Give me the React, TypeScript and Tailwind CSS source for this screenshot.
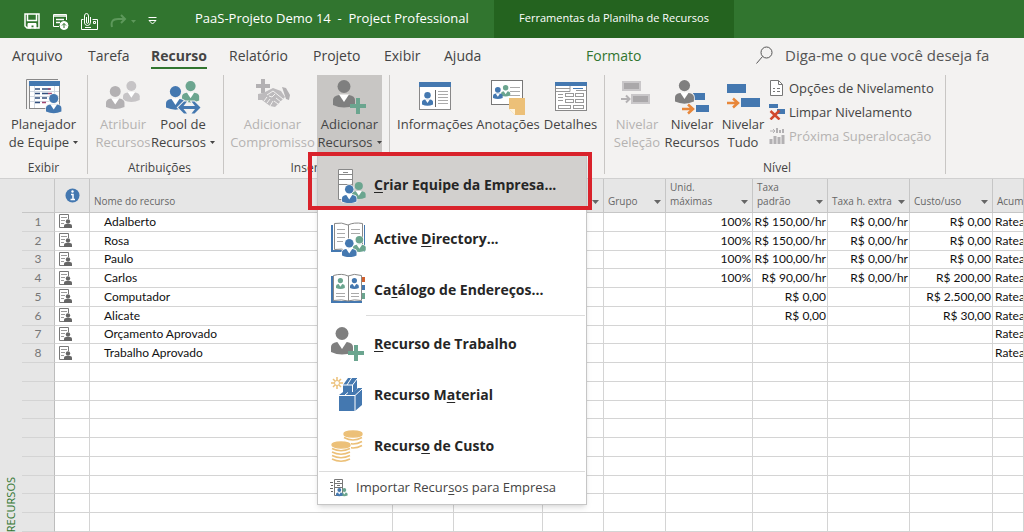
import React from "react";

const BLUE = "#4478b0";
const GREEN = "#6ba58f";
const GRAY = "#7f7f7f";
const MUTED = "#b3b1b3";
const ORANGE = "#e8873a";
const GOLD = "#ecc078";

interface ResourceRow {
  name: string;
  units: string;
  rate: string;
  overtime: string;
  cost: string;
}

const RESOURCES: ResourceRow[] = [
  { name: "Adalberto", units: "100%", rate: "R$ 150,00/hr", overtime: "R$ 0,00/hr", cost: "R$ 0,00" },
  { name: "Rosa", units: "100%", rate: "R$ 150,00/hr", overtime: "R$ 0,00/hr", cost: "R$ 0,00" },
  { name: "Paulo", units: "100%", rate: "R$ 100,00/hr", overtime: "R$ 0,00/hr", cost: "R$ 0,00" },
  { name: "Carlos", units: "100%", rate: "R$ 90,00/hr", overtime: "R$ 0,00/hr", cost: "R$ 200,00" },
  { name: "Computador", units: "", rate: "R$ 0,00", overtime: "", cost: "R$ 2.500,00" },
  { name: "Alicate", units: "", rate: "R$ 0,00", overtime: "", cost: "R$ 30,00" },
  { name: "Orçamento Aprovado", units: "", rate: "", overtime: "", cost: "" },
  { name: "Trabalho Aprovado", units: "", rate: "", overtime: "", cost: "" },
];

const EMPTY_ROWS = Array.from({ length: 9 }, (_, index) => index);

// Head and shoulders, drawn in a 22 x 28 unit box
const Person: React.FC<{ x: number; y: number; scale: number; color: string; halo?: string }> = ({
  x,
  y,
  scale,
  color,
  halo,
}) => (
  <g
    transform={`translate(${x} ${y}) scale(${scale})`}
    fill={color}
    stroke={halo}
    strokeWidth={halo ? 2 : 0}
    paintOrder="stroke"
  >
    <path d="M0 25V20Q0 16 6 15H16Q22 16 22 20V25Q11 30 0 25Z" />
    <path d="M6 14.5L11 22L16 14.5Z" fill="#fff" stroke="none" />
    <circle cx="11" cy="6.5" r="6.5" />
  </g>
);

const PlannerIcon = () => (
  <svg width="36" height="36" viewBox="0 0 36 36">
    <path d="M.5 30V.5H32" fill="none" stroke="#888" />
    <rect x="3.5" y="2.5" width="30" height="27" fill="#fff" stroke="#888" />
    <rect x="3" y="2" width="31" height="5" fill={BLUE} />
    <path d="M8.5 7V29M4 12.5H33M4 17.5H33M4 22.5H33M28.5 7V29" stroke="#d3dae3" />
    <path d="M9 10H14M16 10H24M9 14.5H14M16 14.5H22M9 19H14M16 19H21M9 23.5H14" stroke="#33507e" strokeWidth="1.5" />
    <path d="M22 10H25M22 14.5H26M16 23.5H20" stroke="#a04870" strokeWidth="1.5" />
    <Person x={20} y={15} scale={0.7} color={BLUE} halo="#f3f2f1" />
  </svg>
);

const AssignIcon = () => (
  <svg width="36" height="36" viewBox="0 0 36 36">
    <Person x={18} y={2} scale={0.76} color="#c6c4c6" />
    <Person x={1} y={7} scale={0.84} color={MUTED} halo="#f3f2f1" />
  </svg>
);

const PoolIcon = () => (
  <svg width="36" height="36" viewBox="0 0 36 36">
    <Person x={17} y={2} scale={0.78} color={GREEN} />
    <Person x={1} y={7} scale={0.86} color={BLUE} halo="#f3f2f1" />
    <path
      d="M13 28.5L19 22.5H22L18.5 27H30L26.5 22.5H29.5L35.5 28.5L29.5 34.5H26.5L30 30H18.5L22 34.5H19Z"
      fill={BLUE}
      stroke="#f3f2f1"
      strokeWidth="2"
      paintOrder="stroke"
    />
  </svg>
);

const HandshakeIcon = () => (
  <svg width="36" height="36" viewBox="0 0 36 36">
    <path d="M6 0H10V5H15V9H10V14H6V9H1V5H6Z" fill={MUTED} />
    <path d="M3 15L8 14L18 9L26 12L30 18L26 22L20 28L15 27L7 21L3 21Z" fill="#bdbbbd" />
    <path d="M27 8L31 9L35 16L34 21L31 20Z" fill={MUTED} />
    <path
      d="M12 16L18 12L28 20M14 17L17 18L20 15M9 22L12 18M12 24L15 20M15 27L18 22M19 22L23 25M21 19L26 23"
      fill="none"
      stroke="#f3f2f1"
    />
  </svg>
);

const AddPersonIcon = () => (
  <svg width="36" height="36" viewBox="0 0 36 36">
    <Person x={1} y={1} scale={1} color={GRAY} />
    <path d="M24 19H28V25H34V29H28V35H24V29H18V25H24Z" fill={GREEN} />
  </svg>
);

const InfoCardIcon = () => (
  <svg width="36" height="36" viewBox="0 0 36 36">
    <rect x="2.5" y="3.5" width="31" height="27" fill="#fff" stroke="#888" />
    <rect x="2" y="3" width="32" height="5" fill={BLUE} />
    <Person x={5} y={13} scale={0.5} color={BLUE} />
    <path d="M18.5 11V28" stroke="#666" />
    <path d="M21 12.5H31M21 15.5H31M21 18.5H31M21 21.5H31M21 24.5H31" stroke="#aaa" />
  </svg>
);

const NotesIcon = () => (
  <svg width="36" height="36" viewBox="0 0 36 36">
    <rect x="1.5" y="1.5" width="31" height="24" fill="#fff" stroke="#777" />
    <Person x={11} y={6} scale={0.42} color={GREEN} />
    <Person x={3} y={8} scale={0.44} color={BLUE} />
    <path d="M20 8.5H30M20 12.5H30M20 16.5H30" stroke="#aaa" />
    <path d="M19 19H35V36H25L19 30Z" fill={GOLD} />
    <path d="M19 30H25V36Z" fill="#fff5df" />
  </svg>
);

const DetailsIcon = () => (
  <svg width="36" height="36" viewBox="0 0 36 36">
    <rect x="2.5" y="3.5" width="31" height="28" fill="#fff" stroke="#888" />
    <rect x="2" y="3" width="32" height="4" fill={BLUE} />
    <path d="M3 9.5H17M3 12.5H17V7M23 11.5H33" stroke="#999" fill="none" />
    <path d="M20 9.5H30" stroke={BLUE} />
    <g fill="none" stroke="#999">
      <path d="M5 15.5H10M5 18.5H10M5 21.5H10" />
      <rect x="12.5" y="14.5" width="8" height="3" />
      <rect x="22.5" y="14.5" width="8" height="3" />
      <rect x="12.5" y="20.5" width="8" height="3" />
      <rect x="22.5" y="20.5" width="8" height="3" />
      <rect x="5.5" y="26.5" width="12" height="3" />
      <rect x="20.5" y="26.5" width="10" height="3" />
    </g>
  </svg>
);

const LevelSelectionIcon = () => (
  <svg width="36" height="36" viewBox="0 0 36 36">
    <rect x="3" y="2" width="19" height="10" fill="#c9c7c9" />
    <rect x="5" y="4" width="15" height="6" fill="#aaa8aa" />
    <rect x="12" y="15" width="19" height="10" fill="#c9c7c9" />
    <rect x="14" y="17" width="15" height="6" fill="#aaa8aa" />
    <path d="M2 20H10M7 16.5L10.5 20L7 23.5" fill="none" stroke={MUTED} strokeWidth="2" />
  </svg>
);

const LevelResourcesIcon = () => (
  <svg width="36" height="36" viewBox="0 0 36 36">
    <rect x="19" y="14" width="12" height="7" fill={BLUE} />
    <Person x={1} y={1} scale={0.86} color={GRAY} halo="#f3f2f1" />
    <rect x="22" y="26" width="13" height="7" fill={BLUE} />
    <path d="M8 30H18M14 25.5L19 30L14 34.5" fill="none" stroke={ORANGE} strokeWidth="2.5" />
  </svg>
);

const LevelAllIcon = () => (
  <svg width="36" height="36" viewBox="0 0 36 36">
    <rect x="2" y="5" width="19" height="9" fill={BLUE} />
    <rect x="16" y="19" width="19" height="9" fill={BLUE} />
    <path d="M2 24H12M8 19.5L13 24L8 28.5" fill="none" stroke={ORANGE} strokeWidth="2.5" />
  </svg>
);

const LevelOptionsIcon = () => (
  <svg width="16" height="16" viewBox="0 0 16 16">
    <path d="M1.5.5H9.5L13.5 4.5V15.5H1.5Z" fill="#fff" stroke="#777" />
    <path d="M9.5.5V4.5H13.5" fill="none" stroke="#777" />
    <path d="M4 8.5H6M8 8.5H11M4 11.5H6M8 11.5H11" stroke="#777" />
  </svg>
);

const ClearLevelIcon = () => (
  <svg width="16" height="16" viewBox="0 0 16 16">
    <rect x="0" y="0" width="9" height="4" fill={BLUE} />
    <rect x="8" y="5" width="8" height="5" fill={BLUE} />
    <path d="M1.5 7L10.5 15.5M10.5 6.5L1.5 15.5" stroke="#d1492e" strokeWidth="2.5" />
  </svg>
);

const NextOverallocationIcon = () => (
  <svg width="16" height="16" viewBox="0 0 16 16">
    <path d="M1 3H6M4 1L6 3L4 5" fill="none" stroke={MUTED} />
    <path d="M8 0V5M11 2V5M14 1V5" stroke={MUTED} strokeWidth="2" />
    <path d="M2 11V16M6 8V16M10 9V16M14 7V16" stroke={MUTED} strokeWidth="3" />
  </svg>
);

const ServerTeamIcon = () => (
  <svg width="36" height="36" viewBox="0 0 36 36">
    <path d="M8.5 32.5V2.5H22.5V32.5Z" fill="#fff" stroke="#888" />
    <path d="M8 7.5H22M8 12.5H22M8 17.5H22M13 5.5H18" stroke="#888" />
    <Person x={22} y={15} scale={0.62} color={GREEN} halo="#d2d0ce" />
    <Person x={12} y={18} scale={0.66} color={BLUE} halo="#fff" />
  </svg>
);

const DirectoryIcon = () => (
  <svg width="36" height="36" viewBox="0 0 36 36">
    <path d="M1 4H3V29H34V4H35V31H20L18 32L16 31H1Z" fill={BLUE} />
    <path
      d="M4.5 2.5Q12 1 18 4Q24 1 32.5 2.5V28.5Q24 27 18 30Q12 27 4.5 28.5Z"
      fill="#fff"
      stroke="#888"
    />
    <path d="M18.5 4V29" stroke="#888" />
    <path d="M7 8.5H15M7 12.5H15M7 16.5H15M7 20.5H13M21 8.5H30M21 12.5H30" stroke="#aaa" />
    <Person x={23} y={15} scale={0.58} color={GREEN} halo="#fff" />
    <Person x={12} y={18} scale={0.66} color={BLUE} halo="#fff" />
  </svg>
);

const AddressBookIcon = () => (
  <svg width="36" height="36" viewBox="0 0 36 36">
    <path d="M1 4H4V29H32V31H1Z" fill={BLUE} />
    <path d="M32 5H35V10H32Z" fill="#d1602e" />
    <path d="M32 13H35V18H32Z" fill={BLUE} />
    <path d="M32 21H35V27H32Z" fill={GREEN} />
    <path
      d="M3.5 3.5Q12 1 18 4Q24 1 31.5 3.5V28.5Q24 27 18 29Q12 27 3.5 28.5Z"
      fill="#fff"
      stroke="#888"
    />
    <path d="M18.5 4V29" stroke="#888" />
    <Person x={6} y={6} scale={0.4} color={GREEN} />
    <Person x={20} y={6} scale={0.4} color={BLUE} />
    <path d="M6 21.5H15M6 24.5H15M21 21.5H29M21 24.5H29" stroke="#aaa" />
  </svg>
);

const BoxesIcon = () => (
  <svg width="36" height="36" viewBox="0 0 36 36">
    <path d="M7 0V12M1 6H13M3 2L11 10M11 2L3 10" stroke={GOLD} strokeWidth="1.5" />
    <circle cx="7" cy="6" r="2.5" fill="#fff" stroke={GOLD} />
    <path d="M13 8L18 1H27V12L23 17H13Z" fill={BLUE} />
    <path d="M13 8H22.5L27 2M22.5 8V17M17 8L21.5 1" fill="none" stroke="#fff" />
    <path d="M9 18L13 15H24L28 11H32V28L25 34H9Z" fill={BLUE} />
    <path d="M9 18.5H25L32 12M25 18.5V34M15 18L18 15.5" fill="none" stroke="#fff" />
  </svg>
);

const CoinsIcon = () => (
  <svg width="36" height="36" viewBox="0 0 36 36">
    <g fill="none" stroke={GOLD} strokeWidth="1.5">
      <ellipse cx="23" cy="6" rx="9" ry="3" fill={GOLD} />
      <path d="M14 9.5Q23 14.5 32 9.5M14 13.5Q23 18.5 32 13.5M14 17.5Q23 22.5 32 17.5" />
    </g>
    <rect x="0" y="13" width="21" height="21" fill="#fff" />
    <g fill="none" stroke={GOLD} strokeWidth="1.5">
      <ellipse cx="11" cy="17" rx="9" ry="3" fill={GOLD} />
      <path d="M2 20.5Q11 25 20 20.5M2 24Q11 28.5 20 24M2 27.5Q11 32 20 27.5M2 31Q11 35.5 20 31" />
    </g>
  </svg>
);

const ImportIcon = () => (
  <svg width="18" height="18" viewBox="0 0 18 18">
    <path d="M0 3.5H3M1 6.5H3M0 9.5H3M1 12.5H3" stroke="#666" />
    <path d="M4.5.5H12.5V16.5H4.5Z" fill="#fff" stroke="#777" />
    <path d="M4 4.5H12M4 8.5H12M7 2.5H10M7 6.5H10" stroke="#777" />
    <Person x={11} y={9} scale={0.3} color={GREEN} />
    <Person x={6} y={9} scale={0.3} color={BLUE} />
  </svg>
);

const FormIcon = () => (
  <svg width="13" height="15" viewBox="0 0 13 15">
    <path d="M5 13.5H.5V.5H9.5V5" fill="#fff" stroke="#777" />
    <path d="M2 3.5H8M2 6.5H6M2 9.5H5" stroke="#999" />
    <circle cx="9" cy="7.5" r="2.2" fill="#666" />
    <path d="M5 14V11.5Q5 10 7 10H11Q13 10 13 11.5V14Z" fill="#666" />
  </svg>
);

const Caret = () => (
  <svg width="5" height="3" viewBox="0 0 5 3" className="inline-block shrink-0">
    <path d="M0 0H5L2.5 3Z" fill="currentColor" />
  </svg>
);

interface BigButtonProps {
  icon: React.ReactNode;
  lines: string[];
  className: string;
  caret?: boolean;
  disabled?: boolean;
}

const BigButton: React.FC<BigButtonProps> = ({ icon, lines, className, caret, disabled }) => (
  <button
    type="button"
    disabled={disabled}
    className={`flex flex-col items-center pt-1 text-[13px] leading-[18px] whitespace-nowrap disabled:text-[#b5b3b1] ${className}`}
  >
    {icon}
    {lines.map((line, index) => (
      <span key={line} className="flex items-center gap-1">
        {line}
        {caret && index === lines.length - 1 ? <Caret /> : null}
      </span>
    ))}
  </button>
);

const Group: React.FC<{ label: string; className: string; children: React.ReactNode }> = ({
  label,
  className,
  children,
}) => (
  <section className={`flex shrink-0 flex-col justify-between border-r border-[#c8c6c4] ${className}`}>
    <div className="flex h-[78px]">{children}</div>
    <h2 className="text-center text-xs leading-3">{label}</h2>
  </section>
);

interface MenuItemProps {
  icon: React.ReactNode;
  before?: string;
  mark: string;
  after: string;
  className?: string;
}

const MenuItem: React.FC<MenuItemProps> = ({ icon, before, mark, after, className }) => (
  <button
    type="button"
    role="menuitem"
    className={`flex w-full items-center gap-2 pl-3 text-left text-sm font-bold whitespace-nowrap ${className ?? "h-[51px]"}`}
  >
    {icon}
    <span>
      {before}
      <u className="underline-offset-2">{mark}</u>
      {after}
    </span>
  </button>
);

const AddResourcesMenu = () => (
  <div
    role="menu"
    className="absolute top-full left-0 z-10 mt-0.5 w-[270px] border border-[#c6c6c6] bg-white text-[#262626] shadow-md"
  >
    <MenuItem
      icon={<ServerTeamIcon />}
      mark="C"
      after="riar Equipe da Empresa..."
      className="mb-1 h-[53px] bg-[#d2d0ce] pt-1"
    />
    <MenuItem icon={<DirectoryIcon />} before="Active " mark="D" after="irectory..." />
    <MenuItem icon={<AddressBookIcon />} before="Ca" mark="t" after="álogo de Endereços..." />
    <hr className="mr-px mb-0.5 ml-12 border-[#dcdcdc]" />
    <MenuItem icon={<AddPersonIcon />} mark="R" after="ecurso de Trabalho" />
    <MenuItem icon={<BoxesIcon />} before="Recurso M" mark="a" after="terial" />
    <MenuItem icon={<CoinsIcon />} before="Recurs" mark="o" after=" de Custo" />
    <hr className="mx-px border-[#dcdcdc]" />
    <button
      type="button"
      role="menuitem"
      className="flex h-8 w-full items-center gap-2 pl-3 text-[13px] whitespace-nowrap text-[#444]"
    >
      <ImportIcon />
      <span>
        Importar Recur<u className="underline-offset-2">s</u>os para Empresa
      </span>
    </button>
    <div className="pointer-events-none absolute -top-1 -right-1.5 -left-2.5 h-[58px] border-4 border-[#d9222b]" />
  </div>
);

const TitleBar = () => (
  <header className="flex h-[38px] shrink-0 bg-[#31752f] text-white">
    <div className="flex w-[195px] shrink-0 items-center gap-3 pt-1 pl-6">
      <button type="button" aria-label="Salvar">
        <svg width="16" height="16" viewBox="0 0 16 16" fill="none" stroke="#fff" strokeWidth="1.5">
          <path d="M1 1H15V15H3L1 13Z" />
          <path d="M3.5 1V7.5H12.5V1" />
          <path d="M4 15V10.5H12V15H10V12H7V15Z" fill="#fff" strokeWidth="1" />
        </svg>
      </button>
      <button type="button" aria-label="Publicar">
        <svg width="17" height="17" viewBox="0 0 17 17" fill="none" stroke="#fff">
          <path d="M7 13.5H1.5V1.5H14.5V7" />
          <path d="M1 3H15M4 6.5H12M4 9.5H8" strokeWidth="1.5" />
          <circle cx="12" cy="12.5" r="4" fill="#fff" />
          <path d="M12 15V10.5M10 12.5L12 10.5L14 12.5" stroke="#31752f" />
        </svg>
      </button>
      <button type="button" aria-label="Anexar">
        <svg width="17" height="17" viewBox="0 0 17 17" fill="none" stroke="#fff">
          <path d="M2.5 6.5H.5V16.5H16.5V6.5H11.5" />
          <path d="M3.5 10V3Q3.5.5 5.5.5Q7.5.5 7.5 3V9Q7.5 10.5 6.5 10.5Q5.5 10.5 5.5 9V4M3.5 10Q4 12.5 6.5 12.5Q9.5 12.5 9.5 9V4" />
          <path d="M12.5 8.5H14.5V10.5H12.5ZM4 14.5H10" />
        </svg>
      </button>
      <button type="button" disabled aria-label="Refazer" className="flex items-center gap-1 text-[#5d985b]">
        <svg width="17" height="14" viewBox="0 0 17 14" fill="none" stroke="currentColor" strokeWidth="2">
          <path d="M2 13Q0 5 8 5H15M11 1L15 5L11 9" />
        </svg>
        <Caret />
      </button>
      <button type="button" aria-label="Personalizar">
        <svg width="9" height="8" viewBox="0 0 9 8" fill="none" stroke="#fff">
          <path d="M.5.5H8.5M1 3.5H8L4.5 7Z" />
        </svg>
      </button>
    </div>
    <h1 className="w-[299px] shrink-0 text-[13px] leading-[36px] whitespace-pre">
      PaaS-Projeto Demo 14  -  Project Professional
    </h1>
    <div className="w-[240px] shrink-0 bg-[#24631f] text-center text-[11px] leading-[36px] whitespace-nowrap">
      Ferramentas da Planilha de Recursos
    </div>
  </header>
);

const TABS = [
  { label: "Arquivo", className: "w-[76px]" },
  { label: "Tarefa", className: "w-[63px]" },
  { label: "Recurso", className: "w-[78px] font-bold" },
  { label: "Relatório", className: "w-[84px]" },
  { label: "Projeto", className: "w-[71px]" },
  { label: "Exibir", className: "w-[60px]" },
  { label: "Ajuda", className: "w-[142px]" },
  { label: "Formato", className: "w-[170px] text-[#31752f]" },
];

const TabBar = () => (
  <nav className="flex h-[37px] shrink-0 items-center overflow-hidden pl-3 text-sm leading-[22px]">
    {TABS.map((tab) => (
      <a key={tab.label} href="#" className={`shrink-0 ${tab.className}`}>
        <span
          className={
            tab.label === "Recurso"
              ? "inline-block border-b-2 border-[#31752f]"
              : "inline-block border-b-2 border-transparent"
          }
        >
          {tab.label}
        </span>
      </a>
    ))}
    <label className="flex flex-1 items-center gap-3 pb-1">
      <svg width="17" height="18" viewBox="0 0 17 18" fill="none" stroke="#555" className="shrink-0">
        <circle cx="10.5" cy="6.5" r="5.5" />
        <path d="M6.5 10.5L.5 17.5" />
      </svg>
      <input
        type="text"
        placeholder="Diga-me o que você deseja fa"
        className="w-full min-w-0 bg-transparent text-[15px] outline-none placeholder:text-[#555]"
      />
    </label>
  </nav>
);

const Ribbon = () => (
  <div className="flex h-[103px] shrink-0 pb-1">
    <Group label="Exibir" className="w-[88px]">
      <BigButton icon={<PlannerIcon />} lines={["Planejador", "de Equipe"]} caret className="w-full" />
    </Group>
    <Group label="Atribuições" className="w-[136px] pl-2">
      <BigButton icon={<AssignIcon />} lines={["Atribuir", "Recursos"]} disabled className="w-[54px]" />
      <BigButton icon={<PoolIcon />} lines={["Pool de", "Recursos"]} caret className="w-[66px]" />
    </Group>
    <Group label="Inserir" className="w-[166px] pl-1">
      <BigButton icon={<HandshakeIcon />} lines={["Adicionar", "Compromisso"]} disabled className="w-[89px]" />
      <div className="relative">
        <BigButton
          icon={<AddPersonIcon />}
          lines={["Adicionar", "Recursos"]}
          caret
          className="h-full w-[65px] bg-[#c8c6c4]"
        />
        <AddResourcesMenu />
      </div>
    </Group>
    <Group label="Propriedades" className="w-[215px] pl-1.5">
      <BigButton icon={<InfoCardIcon />} lines={["Informações"]} className="w-[78px]" />
      <BigButton icon={<NotesIcon />} lines={["Anotações"]} className="w-[68px]" />
      <BigButton icon={<DetailsIcon />} lines={["Detalhes"]} className="w-[57px]" />
    </Group>
    <Group label="Nível" className="w-[341px] pl-1">
      <BigButton icon={<LevelSelectionIcon />} lines={["Nivelar", "Seleção"]} disabled className="w-[56px]" />
      <BigButton icon={<LevelResourcesIcon />} lines={["Nivelar", "Recursos"]} className="w-[54px]" />
      <BigButton icon={<LevelAllIcon />} lines={["Nivelar", "Tudo"]} className="w-[48px]" />
      <div className="flex flex-col pt-px pl-0.5 text-[13px] leading-6 whitespace-nowrap">
        <button type="button" className="flex items-center gap-1">
          <LevelOptionsIcon />
          Opções de Nivelamento
        </button>
        <button type="button" className="flex items-center gap-1">
          <ClearLevelIcon />
          Limpar Nivelamento
        </button>
        <button type="button" disabled className="flex items-center gap-1 text-[#b5b3b1]">
          <NextOverallocationIcon />
          Próxima Superalocação
        </button>
      </div>
    </Group>
  </div>
);

const HeaderCell: React.FC<{ label?: string; caret?: boolean }> = ({ label, caret }) => (
  <th className="h-[34px] overflow-hidden border-r border-b border-[#c6c6c6] p-0 px-1 align-bottom font-normal">
    <span className="flex min-h-6 items-end justify-between pb-1">
      <span className="text-left leading-[14px] whitespace-pre">{label}</span>
      {caret ? (
        <svg width="7" height="4" viewBox="0 0 7 4" className="mb-1 shrink-0">
          <path d="M0 0H7L3.5 4Z" fill="#666" />
        </svg>
      ) : null}
    </span>
  </th>
);

const CELL = "overflow-hidden border-r border-b border-[#d4d4d4] p-0 pr-px pl-0.5 whitespace-nowrap";
const NUMBER_CELL = "overflow-hidden border-r border-b border-[#d4d4d4] p-0 pr-px text-right whitespace-nowrap";
const ROW_HEAD = "border-r border-b border-[#d4d4d4] border-r-[#bdbdbd] bg-[#e6e6e6] p-0 font-normal text-[#777]";

const ResourceSheet = () => (
  <table className="h-full w-full table-fixed border-separate border-spacing-0 bg-white font-['Lato','Liberation_Sans',sans-serif] text-xs leading-4 text-[#111]">
    <colgroup>
      <col className="w-[33px]" />
      <col className="w-[35px]" />
      <col className="w-[303px]" />
      <col className="w-[61px]" />
      <col className="w-[89px]" />
      <col className="w-[61px]" />
      <col className="w-[62px]" />
      <col className="w-[87px]" />
      <col className="w-[75px]" />
      <col className="w-[82px]" />
      <col className="w-[83px]" />
      <col />
    </colgroup>
    <thead className="bg-[#e6e6e6] font-['Open_Sans','Liberation_Sans',sans-serif] text-[10px] text-[#666]">
      <tr>
        <HeaderCell />
        <th className="border-r border-b border-[#c6c6c6] p-0">
          <svg width="15" height="15" viewBox="0 0 15 15" className="mx-auto" aria-label="Indicadores">
            <circle cx="7.5" cy="7.5" r="7" fill={BLUE} />
            <circle cx="7.5" cy="3.5" r="1.2" fill="#fff" />
            <path d="M6 6.5H8V11.5M5.5 11.5H10" fill="none" stroke="#fff" strokeWidth="1.5" />
          </svg>
        </th>
        <HeaderCell label="Nome do recurso" />
        <HeaderCell label="Tipo" caret />
        <HeaderCell label="Unidade" caret />
        <HeaderCell label="Iniciais" caret />
        <HeaderCell label="Grupo" caret />
        <HeaderCell label={"Unid.\nmáximas"} caret />
        <HeaderCell label={"Taxa\npadrão"} caret />
        <HeaderCell label="Taxa h. extra" caret />
        <HeaderCell label="Custo/uso" caret />
        <HeaderCell label="Acum" />
      </tr>
    </thead>
    <tbody>
      {RESOURCES.map((resource, index) => (
        <tr key={resource.name} className="h-[18px]">
          <th scope="row" className={ROW_HEAD}>
            {index + 1}
          </th>
          <td className={CELL}>
            <span className="block pl-0.5">
              <FormIcon />
            </span>
          </td>
          <td className={CELL}>
            <span className="pl-3">{resource.name}</span>
          </td>
          <td className={CELL} />
          <td className={CELL} />
          <td className={CELL} />
          <td className={CELL} />
          <td className={NUMBER_CELL}>{resource.units}</td>
          <td className={NUMBER_CELL}>{resource.rate}</td>
          <td className={NUMBER_CELL}>{resource.overtime}</td>
          <td className={NUMBER_CELL}>{resource.cost}</td>
          <td className={CELL}>Ratea</td>
        </tr>
      ))}
      {EMPTY_ROWS.map((row) => (
        <tr key={row} className="h-[18px]">
          <th className={ROW_HEAD} />
          <td className={CELL} />
          <td className={CELL} />
          <td className={CELL} />
          <td className={CELL} />
          <td className={CELL} />
          <td className={CELL} />
          <td className={CELL} />
          <td className={CELL} />
          <td className={CELL} />
          <td className={CELL} />
          <td className={CELL} />
        </tr>
      ))}
    </tbody>
  </table>
);

const App: React.FC = () => (
  <div className="flex h-screen flex-col overflow-hidden bg-[#f3f2f1] font-['Open_Sans','Liberation_Sans',sans-serif] text-[#444]">
    <TitleBar />
    <TabBar />
    <Ribbon />
    <main className="flex min-h-0 flex-1 border-t border-[#d0d0d0]">
      <aside className="flex w-[22px] shrink-0 items-end justify-center bg-[#e6e6e6]">
        <span className="rotate-180 text-[11px] leading-4 text-[#31752f] [writing-mode:vertical-rl]">RECURSOS</span>
      </aside>
      <div className="min-w-0 flex-1">
        <ResourceSheet />
      </div>
    </main>
  </div>
);

export default App;
